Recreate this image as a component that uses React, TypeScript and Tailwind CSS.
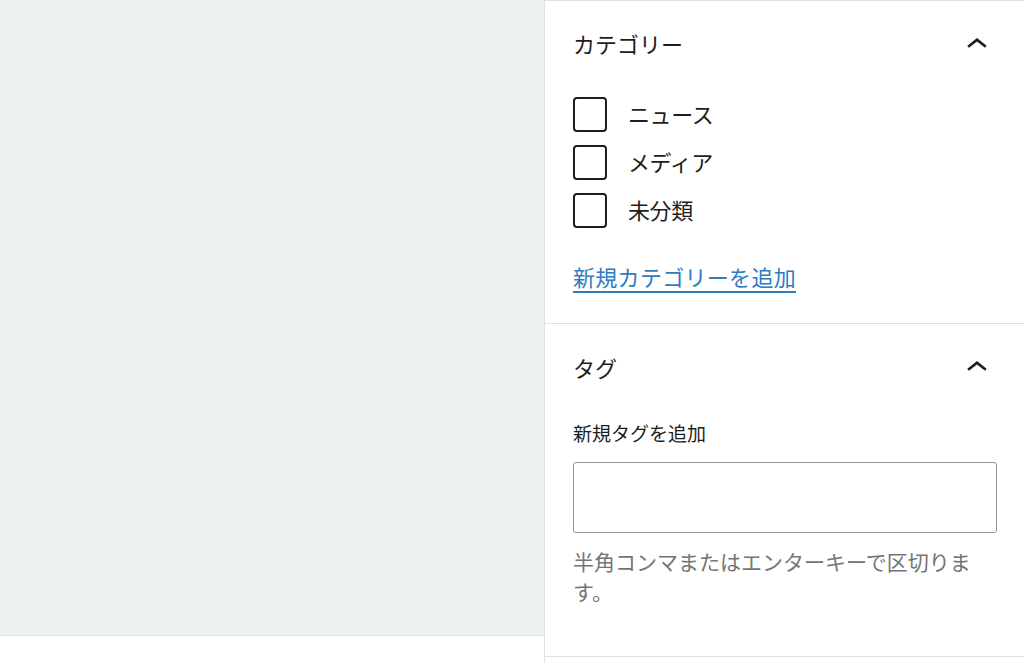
import React from "react";

const Chevron = () => (
  <svg width="42" height="42" viewBox="0 0 24 24" className="shrink-0 -mr-[0.5px]">
    <path d="M6.5 12.4L12 8l5.5 4.4-.9 1.2L12 10l-4.6 3.6-1-1.2z" fill="#1e1e1e" />
  </svg>
);

const Check = ({ label }: { label: string }) => (
  <div className="flex items-center h-[35px]">
    <span className="w-[34px] h-[35px] border-2 border-[#1e1e1e] rounded-[4px] bg-white shrink-0" />
    <span className="ml-[21px] pb-[4px] text-[22px] leading-[30px] text-[#1e1e1e] tracking-[-0.4px]">{label}</span>
  </div>
);

export default function App() {
  const font = { fontFamily: '"Noto Sans CJK JP", "Noto Sans", sans-serif' };
  return (
    <div className="flex w-[1024px] h-[663px] overflow-hidden bg-white" style={font}>
      <div className="w-[544px] flex flex-col shrink-0">
        <div className="h-[636px] bg-[#edf0f1] border-b border-[#e2e4e7]" />
        <div className="flex-1 bg-white" />
      </div>
      <div className="w-[480px] shrink-0 flex flex-col">
        <div className="border-l border-t border-[#e0e0e0] flex-none">
          <div className="px-[28px] pr-[27px]">
            <div className="h-[88px] flex items-center justify-between">
              <span className="pb-[4px] text-[22px] leading-[30px] text-[#1e1e1e]">カテゴリー</span>
              <Chevron />
            </div>
            <div className="pt-[8px] flex flex-col gap-[13px]">
              <Check label="ニュース" />
              <Check label="メディア" />
              <Check label="未分類" />
            </div>
            <div className="mt-[33px] pb-[32px]">
              <a href="#" className="block w-fit text-[22px] leading-[30px] text-[#2f7cc0] underline underline-offset-[5px] decoration-[1.5px] tracking-[0.3px]">
                新規カテゴリーを追加
              </a>
            </div>
          </div>
        </div>
        <div className="border-l border-t border-b border-[#e0e0e0] flex-none">
          <div className="px-[28px] pr-[27px]">
            <div className="h-[88px] flex items-center justify-between">
              <span className="pb-[3px] text-[22px] leading-[30px] text-[#1e1e1e]">タグ</span>
              <Chevron />
            </div>
            <div className="mt-[8px] pb-[1px] text-[19px] leading-[26px] text-[#1e1e1e]">新規タグを追加</div>
            <div className="mt-[15px] h-[71px] border-[1.5px] border-[#949494] rounded-[3px] bg-white" />
            <p className="mt-[13px] pb-[50px] text-[21px] leading-[30px] text-[#757575]">
              半角コンマまたはエンターキーで区切ります。
            </p>
          </div>
        </div>
        <div className="flex-1 border-l border-[#e0e0e0]" />
      </div>
    </div>
  );
}
